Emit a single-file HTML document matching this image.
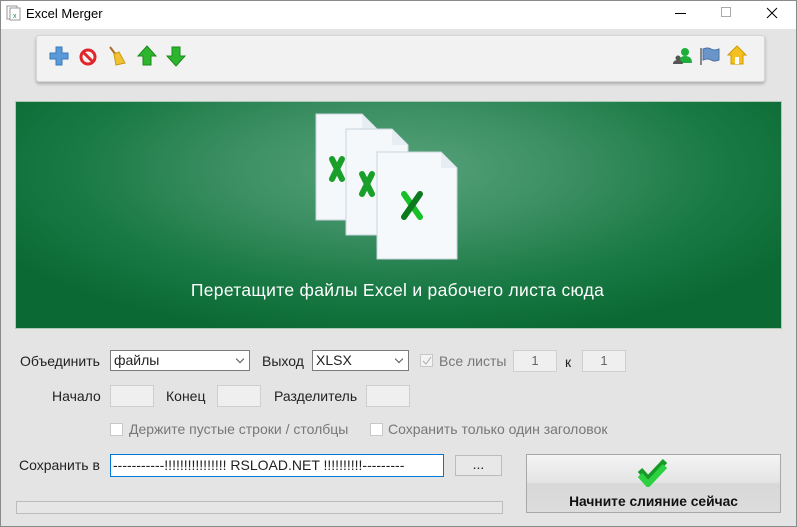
<!DOCTYPE html>
<html><head><meta charset="utf-8"><style>
*{box-sizing:border-box;margin:0;padding:0}
body{width:797px;height:527px;overflow:hidden;background:#e4e4e4;font-family:"Liberation Sans",sans-serif;font-size:14px;color:#222;position:relative}
.a{position:absolute}
.title{left:0;top:0;width:797px;height:29px;background:#fff}
.lbl{position:absolute;font-size:14px;white-space:nowrap}
.box{position:absolute;background:#efefef;border:1px solid #cfcfcf;height:22px;text-align:center;line-height:20px;color:#666;font-size:13px}
.sel{position:absolute;background:#fff;border:1px solid #7a7a7a;height:21px;line-height:19px;padding-left:3px}
.sel:after{content:"";position:absolute;right:6px;top:5px;width:5px;height:5px;border-right:1px solid #555;border-bottom:1px solid #555;transform:rotate(45deg)}
.cb{position:absolute;width:13px;height:13px;border:1px solid #c8c8c8;background:#fff}
.dis{color:#777}
</style></head><body>
<div class="a title"></div>
<div class="a" style="left:0;top:0;width:797px;height:527px;border:1px solid #8a8a8a;z-index:5;pointer-events:none"></div>
<svg class="a" style="left:5px;top:5px" width="16" height="16"><rect x="2" y="1" width="10" height="13" fill="#fff" stroke="#999"/><rect x="5" y="3" width="10" height="12" fill="#fff" stroke="#999"/><text x="8" y="13" font-size="7" fill="#1a8a3a">x</text></svg>
<div class="lbl" style="left:26px;top:6px;font-size:13px;color:#000">Excel Merger</div>
<div class="a" style="left:675px;top:13px;width:11px;height:1px;background:#000"></div>
<div class="a" style="left:721px;top:7px;width:10px;height:10px;border:1px solid #aaa"></div>
<svg class="a" style="left:766px;top:7px" width="12" height="12"><path d="M1 1L11 11M11 1L1 11" stroke="#000" stroke-width="1"/></svg>

<div class="a" style="left:36px;top:35px;width:729px;height:47px;background:#f2f2f2;border:1px solid #d6d6d6;border-radius:3px;box-shadow:0 2px 3px rgba(0,0,0,.25)"></div>
<svg class="a" style="left:49px;top:46px" width="20" height="20"><path d="M7 1h6v6h6v6h-6v6H7v-6H1V7h6z" fill="#5a9ad8" stroke="#3a7ab8"/></svg>
<svg class="a" style="left:79px;top:48px" width="18" height="18"><circle cx="9" cy="9" r="7" fill="none" stroke="#e0262a" stroke-width="3"/><path d="M4 4L14 14" stroke="#e0262a" stroke-width="3"/></svg>
<svg class="a" style="left:107px;top:45px" width="20" height="22"><path d="M3 2L9 10" stroke="#b06a20" stroke-width="2"/><path d="M7 9l5-2 6 11-9 2z" fill="#f2c230" stroke="#c89a10"/></svg>
<svg class="a" style="left:137px;top:45px" width="20" height="22"><path d="M10 1L19 11H14V20H6V11H1z" fill="#2eb52e" stroke="#1a8a1a"/></svg>
<svg class="a" style="left:166px;top:45px" width="20" height="22"><path d="M10 21L19 11H14V2H6V11H1z" fill="#2eb52e" stroke="#1a8a1a"/></svg>
<svg class="a" style="left:672px;top:46px" width="22" height="20"><circle cx="13" cy="6" r="4" fill="#1fae3a"/><path d="M6 17q1-7 7-7 7 0 7 7z" fill="#1fae3a"/><circle cx="6" cy="12" r="2.5" fill="#555"/><path d="M1 18q0-4 5-4 4 0 5 4z" fill="#555"/></svg>
<svg class="a" style="left:699px;top:46px" width="21" height="20"><path d="M2 2v17" stroke="#888" stroke-width="2"/><path d="M4 3q5-2 8 0t8 0v11q-5 2-8 0t-8 0z" fill="#6b94c8" stroke="#4a74a8"/></svg>
<svg class="a" style="left:727px;top:45px" width="20" height="20"><path d="M10 1L19 10H16V19H4V10H1z" fill="#f4c020" stroke="#d09a00"/><rect x="8" y="12" width="4" height="7" fill="#fff"/></svg>

<div class="a" style="left:15px;top:101px;width:767px;height:228px;border:1px solid #b0c8b8;background:radial-gradient(ellipse 60% 75% at 50% 30%,#57a27a 0%,#3d9064 35%,#1a7a45 70%,#0b6a33 100%)"></div>
<svg class="a" style="left:309px;top:109px" width="160" height="160">
<g><path d="M7 5h46l16 16v90H7z" fill="#f4f8fb" stroke="#c8d4dc"/><path d="M53 5v16h16" fill="#e6eef4"/><path d="M23 50l10 20M33 50l-10 20" stroke="#1aa02a" stroke-width="6" stroke-linecap="round"/></g>
<g transform="translate(30,15)"><path d="M7 5h46l16 16v90H7z" fill="#f4f8fb" stroke="#c8d4dc"/><path d="M53 5v16h16" fill="#e6eef4"/><path d="M23 50l10 20M33 50l-10 20" stroke="#1aa02a" stroke-width="6" stroke-linecap="round"/></g>
<g transform="translate(61,38)"><path d="M7 5h64l16 16v91H7z" fill="#f6f9fc" stroke="#c8d4dc"/><path d="M71 5v16h16" fill="#e6eef4"/><path d="M34 47l16 23" stroke="#18c028" stroke-width="6" stroke-linecap="round"/><path d="M50 47l-16 23" stroke="#0c7a1c" stroke-width="6" stroke-linecap="round"/></g>
</svg>
<div class="lbl" style="left:0;width:795px;text-align:center;top:280px;font-size:17.5px;color:#fff;letter-spacing:.3px">Перетащите файлы Excel и рабочего листа сюда</div>

<div class="lbl" style="left:20px;top:353px">Объединить</div>
<div class="sel" style="left:110px;top:350px;width:140px">файлы</div>
<div class="lbl" style="left:262px;top:353px">Выход</div>
<div class="sel" style="left:312px;top:350px;width:97px">XLSX</div>
<div class="cb" style="left:420px;top:354px;background:#f3f3f3"></div>
<svg class="a" style="left:421px;top:355px" width="12" height="12"><path d="M2 6l3 3 5-7" fill="none" stroke="#aaa"/></svg>
<div class="lbl dis" style="left:439px;top:353px">Все листы</div>
<div class="box" style="left:513px;top:350px;width:44px">1</div>
<div class="lbl" style="left:565px;top:354px">к</div>
<div class="box" style="left:582px;top:350px;width:44px">1</div>

<div class="lbl" style="left:52px;top:388px">Начало</div>
<div class="box" style="left:110px;top:385px;width:44px"></div>
<div class="lbl" style="left:166px;top:388px">Конец</div>
<div class="box" style="left:217px;top:385px;width:44px"></div>
<div class="lbl" style="left:274px;top:388px">Разделитель</div>
<div class="box" style="left:366px;top:385px;width:44px"></div>

<div class="cb" style="left:110px;top:423px"></div>
<div class="lbl dis" style="left:129px;top:421px">Держите пустые строки / столбцы</div>
<div class="cb" style="left:370px;top:423px"></div>
<div class="lbl dis" style="left:388px;top:421px">Сохранить только один заголовок</div>

<div class="lbl" style="left:19px;top:457px">Сохранить в</div>
<div class="a" style="left:110px;top:454px;width:334px;height:23px;background:#fff;border:1px solid #0078d7;padding:2px 0 0 2px;font-size:14px;white-space:nowrap;overflow:hidden">-----------!!!!!!!!!!!!!!!! RSLOAD.NET !!!!!!!!!!---------</div>
<div class="a" style="left:455px;top:455px;width:47px;height:21px;background:#e8e8e8;border:1px solid #bcbcbc;text-align:center;line-height:17px">...</div>
<div class="a" style="left:16px;top:501px;width:487px;height:13px;background:#e6e6e6;border:1px solid #bcbcbc"></div>
<div class="a" style="left:526px;top:454px;width:255px;height:59px;border:1px solid #a8a8a8;background:linear-gradient(#f4f4f4,#e4e4e4 48%,#d8d8d8 50%,#dcdcdc)"></div>
<svg class="a" style="left:637px;top:457px" width="32" height="30"><path d="M3 13l8 9 17-18" fill="none" stroke="#159a25" stroke-width="6"/><path d="M3 18l8 9 17-18" fill="none" stroke="#2cd040" stroke-width="6"/></svg>
<div class="lbl" style="left:526px;width:255px;text-align:center;top:494px;font-weight:bold;color:#111;font-size:13.8px">Начните слияние сейчас</div>
</body></html>
